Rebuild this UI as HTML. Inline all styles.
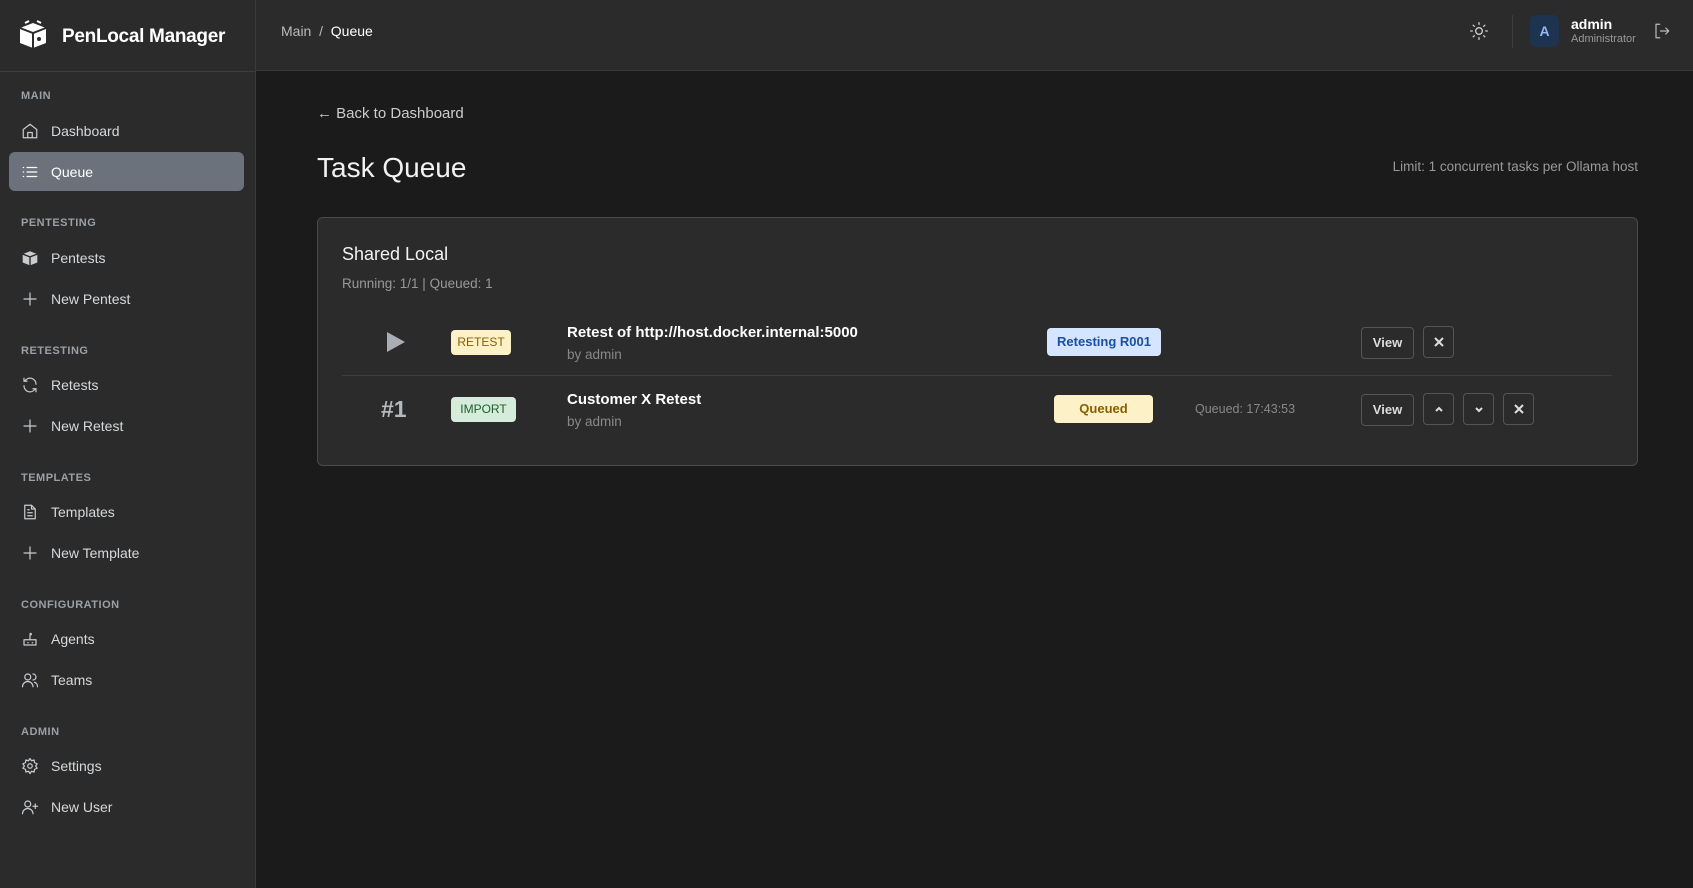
<!DOCTYPE html>
<html><head><meta charset="utf-8"><style>
*{box-sizing:border-box;margin:0;padding:0}
body{width:1693px;height:888px;background:#1b1b1b;font-family:"Liberation Sans",sans-serif;color:#e8e8e8;position:relative;overflow:hidden}
.abs{position:absolute}
#side{left:0;top:0;width:256px;height:888px;background:#2b2b2b;border-right:1px solid #3a3a3a}
#head{left:256px;top:0;width:1437px;height:71px;background:#2b2b2b;border-bottom:1px solid #3a3a3a}
.logoline{left:0;top:71px;width:256px;height:1px;background:#3d3d3d}
.sec{left:21px;font-size:11px;letter-spacing:.5px;color:#9aa0a6;font-weight:bold}
.it{left:51px;font-size:14px;color:#d6d9dc;line-height:16px}
.ic{left:21px;width:18px;height:18px}
.ic svg{width:18px;height:18px;fill:none;stroke:#c8ccd0;stroke-width:1.6;stroke-linecap:round;stroke-linejoin:round}
.badge{border-radius:4px;font-size:12px;text-align:center;line-height:25px}
.btn{border:1px solid #555;border-radius:4px;height:32px;color:#ddd;font-size:13px;font-weight:bold;text-align:center;line-height:30px}
.btn svg{width:12px;height:12px;stroke:#ddd;stroke-width:2;fill:none;margin-top:9px}
</style></head><body>
<div id="side" class="abs"></div>
<div id="head" class="abs"></div>
<div class="abs logoline"></div>
<svg class="abs" style="left:17px;top:19px" width="32" height="32" viewBox="0 0 32 32"><path d="M3 9 L16 4 L29 9 L29 24 L16 29 L3 24Z" fill="#fff"/><path d="M3 9 L16 14 L29 9 M16 14 V29" stroke="#2b2b2b" stroke-width="2" fill="none"/><circle cx="22" cy="20" r="2" fill="#2b2b2b"/><path d="M8 4 L12 2 M20 2 L24 4" stroke="#fff" stroke-width="2"/></svg>
<div class="abs" style="left:62px;top:26px;font-size:19px;font-weight:bold;color:#fff;letter-spacing:-0.3px">PenLocal Manager</div>

<div class="abs sec" style="top:90px">MAIN</div>
<div class="abs ic" style="top:122px"><svg viewBox="0 0 24 24"><path d="M3 10 L12 3 L21 10 V21 H3Z M9 21 V14 H15 V21"/></svg></div>
<div class="abs it" style="top:123px">Dashboard</div>
<div class="abs" style="left:9px;top:152px;width:235px;height:39px;background:#6b727b;border-radius:6px"></div>
<div class="abs ic" style="top:163px"><svg viewBox="0 0 24 24" style="stroke:#fff"><path d="M8 6H21M8 12H21M8 18H21M3 6H3.5M3 12H3.5M3 18H3.5"/></svg></div>
<div class="abs it" style="top:164px;color:#fff">Queue</div>

<div class="abs sec" style="top:217px">PENTESTING</div>
<svg class="abs" style="left:21px;top:249px" width="18" height="18" viewBox="0 0 32 32"><path d="M3 9 L16 4 L29 9 L29 24 L16 29 L3 24Z" fill="#c8ccd0"/><path d="M3 9 L16 14 L29 9 M16 14 V29" stroke="#2b2b2b" stroke-width="2.5" fill="none"/></svg>
<div class="abs it" style="top:250px">Pentests</div>
<div class="abs ic" style="top:290px"><svg viewBox="0 0 24 24"><path d="M12 4V20M4 12H20"/></svg></div>
<div class="abs it" style="top:291px">New Pentest</div>

<div class="abs sec" style="top:345px">RETESTING</div>
<div class="abs ic" style="top:376px"><svg viewBox="0 0 24 24"><path d="M20 11A8 8 0 0 0 5 7M4 3V7H8M4 13A8 8 0 0 0 19 17M20 21V17H16"/></svg></div>
<div class="abs it" style="top:377px">Retests</div>
<div class="abs ic" style="top:417px"><svg viewBox="0 0 24 24"><path d="M12 4V20M4 12H20"/></svg></div>
<div class="abs it" style="top:418px">New Retest</div>

<div class="abs sec" style="top:472px">TEMPLATES</div>
<div class="abs ic" style="top:503px"><svg viewBox="0 0 24 24"><path d="M5 3H14L19 8V21H5Z M14 3V8H19 M9 13H15M9 17H15M9 9H11"/></svg></div>
<div class="abs it" style="top:504px">Templates</div>
<div class="abs ic" style="top:544px"><svg viewBox="0 0 24 24"><path d="M12 4V20M4 12H20"/></svg></div>
<div class="abs it" style="top:545px">New Template</div>

<div class="abs sec" style="top:599px">CONFIGURATION</div>
<div class="abs ic" style="top:630px"><svg viewBox="0 0 24 24"><path d="M4 13H20V20H4Z M12 13V7 M12 5A1 1 0 1 1 12 6 M9 17H9.5M15 17H15.5"/></svg></div>
<div class="abs it" style="top:631px">Agents</div>
<div class="abs ic" style="top:671px"><svg viewBox="0 0 24 24"><circle cx="9" cy="8" r="4"/><path d="M2 21A7 7 0 0 1 16 21M16 4A4 4 0 0 1 16 12M18 15A6 6 0 0 1 22 21"/></svg></div>
<div class="abs it" style="top:672px">Teams</div>

<div class="abs sec" style="top:726px">ADMIN</div>
<div class="abs ic" style="top:757px"><svg viewBox="0 0 24 24"><circle cx="12" cy="12" r="3"/><path d="M12 2L14 5L17.5 4L18 7.5L21.5 9L19.5 12L21.5 15L18 16.5L17.5 20L14 19L12 22L10 19L6.5 20L6 16.5L2.5 15L4.5 12L2.5 9L6 7.5L6.5 4L10 5Z"/></svg></div>
<div class="abs it" style="top:758px">Settings</div>
<div class="abs ic" style="top:798px"><svg viewBox="0 0 24 24"><circle cx="9" cy="8" r="4"/><path d="M2 21A7 7 0 0 1 16 21M19 8V14M16 11H22"/></svg></div>
<div class="abs it" style="top:799px">New User</div>

<div class="abs" style="left:281px;top:23px;font-size:14px;color:#bbb">Main &nbsp;/&nbsp; <span style="color:#fff">Queue</span></div>
<svg class="abs" style="left:1469px;top:21px" width="20" height="20" viewBox="0 0 24 24" fill="none" stroke="#ccc" stroke-width="1.6" stroke-linecap="round"><circle cx="12" cy="12" r="4"/><path d="M12 2V4M12 20V22M2 12H4M20 12H22M5 5L6.4 6.4M17.6 17.6L19 19M5 19L6.4 17.6M17.6 6.4L19 5"/></svg>
<div class="abs" style="left:1512px;top:15px;width:1px;height:33px;background:#3d3d3d"></div>
<div class="abs" style="left:1530px;top:15px;width:29px;height:32px;border-radius:6px;background:#1e3350;color:#8fb7f2;font-size:14px;font-weight:bold;text-align:center;line-height:32px">A</div>
<div class="abs" style="left:1571px;top:16px;font-size:14px;font-weight:bold;color:#fff">admin</div>
<div class="abs" style="left:1571px;top:33px;font-size:11px;color:#999">Administrator</div>
<svg class="abs" style="left:1653px;top:22px" width="18" height="18" viewBox="0 0 24 24" fill="none" stroke="#bbb" stroke-width="1.6" stroke-linecap="round" stroke-linejoin="round"><path d="M9 3H4V21H9M10 12H21M17 8L21 12L17 16"/></svg>

<div class="abs" style="left:317px;top:105px;font-size:15px;color:#ccc">← Back to Dashboard</div>
<div class="abs" style="left:317px;top:152px;font-size:28px;color:#f2f2f2;font-weight:500">Task Queue</div>
<div class="abs" style="right:55px;top:159px;font-size:13.5px;color:#999">Limit: 1 concurrent tasks per Ollama host</div>

<div class="abs" style="left:317px;top:217px;width:1321px;height:249px;background:#2b2b2b;border:1px solid #4a4a4a;border-radius:6px"></div>
<div class="abs" style="left:342px;top:244px;font-size:18px;color:#f2f2f2;font-weight:500">Shared Local</div>
<div class="abs" style="left:342px;top:276px;font-size:13.5px;color:#999">Running: 1/1 | Queued: 1</div>
<div class="abs" style="left:342px;top:375px;width:1270px;height:1px;background:#3d3d3d"></div>

<svg class="abs" style="left:386px;top:332px" width="20" height="20" viewBox="0 0 20 20"><path d="M1 0L19 10L1 20Z" fill="#a9aeb4"/></svg>
<div class="abs badge" style="left:451px;top:330px;width:60px;background:#fdf2c7;color:#8a5d00">RETEST</div>
<div class="abs" style="left:567px;top:324px;font-size:15px;font-weight:bold;color:#fff">Retest of http://host.docker.internal:5000</div>
<div class="abs" style="left:567px;top:347px;font-size:13.5px;color:#888">by admin</div>
<div class="abs badge" style="left:1047px;top:328px;width:114px;height:28px;line-height:28px;background:#d5e5ff;color:#1b4fa0;font-size:13px;font-weight:bold">Retesting R001</div>
<div class="abs btn" style="left:1361px;top:327px;width:53px">View</div>
<div class="abs btn" style="left:1423px;top:326px;width:31px"><svg viewBox="0 0 12 12"><path d="M2 2L10 10M10 2L2 10"/></svg></div>

<div class="abs" style="left:381px;top:396px;font-size:23px;font-weight:bold;color:#b5b9be">#1</div>
<div class="abs badge" style="left:451px;top:397px;width:65px;background:#d5ecdb;color:#1d5e2d">IMPORT</div>
<div class="abs" style="left:567px;top:391px;font-size:15px;font-weight:bold;color:#fff">Customer X Retest</div>
<div class="abs" style="left:567px;top:414px;font-size:13.5px;color:#888">by admin</div>
<div class="abs badge" style="left:1054px;top:395px;width:99px;height:28px;line-height:28px;background:#fdf2c7;color:#8a5d00;font-size:13px;font-weight:bold">Queued</div>
<div class="abs" style="left:1195px;top:402px;font-size:12.5px;color:#888">Queued: 17:43:53</div>
<div class="abs btn" style="left:1361px;top:394px;width:53px">View</div>
<div class="abs btn" style="left:1423px;top:393px;width:31px"><svg viewBox="0 0 12 12"><path d="M3 8L6 5L9 8"/></svg></div>
<div class="abs btn" style="left:1463px;top:393px;width:31px"><svg viewBox="0 0 12 12"><path d="M3 5L6 8L9 5"/></svg></div>
<div class="abs btn" style="left:1503px;top:393px;width:31px"><svg viewBox="0 0 12 12"><path d="M2 2L10 10M10 2L2 10"/></svg></div>
</body></html>
